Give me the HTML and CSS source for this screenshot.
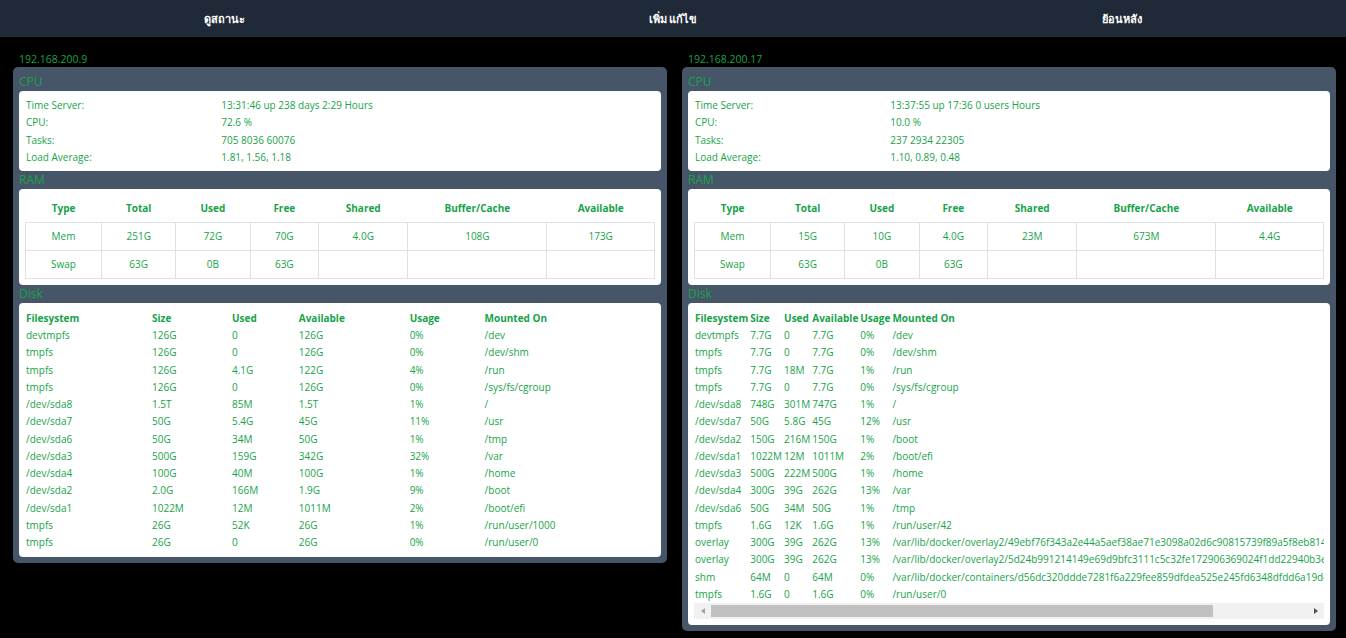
FILE: index.html
```html
<!DOCTYPE html>
<html lang="th">
<head>
<meta charset="utf-8">
<title>Server Status</title>
<link rel="stylesheet" href="styles.css">
</head>
<body>
<nav class="topnav">
  <a class="nav-item" href="#">ดูสถานะ</a>
  <a class="nav-item" href="#">เพิ่ม แก้ไข</a>
  <a class="nav-item" href="#">ย้อนหลัง</a>
</nav>
<main class="servers">
  <section class="server">
    <div class="server-ip">192.168.200.9</div>
    <div class="panel">
      <h2 class="panel-title">CPU</h2>
      <div class="card card-kv">
        <table class="kv">
          <tr><td>Time Server:</td><td>13:31:46 up 238 days 2:29 Hours</td></tr>
          <tr><td>CPU:</td><td>72.6 %</td></tr>
          <tr><td>Tasks:</td><td>705 8036 60076</td></tr>
          <tr><td>Load Average:</td><td>1.81, 1.56, 1.18</td></tr>
        </table>
      </div>
      <h2 class="panel-title">RAM</h2>
      <div class="card">
        <table class="ram">
          <thead>
            <tr><th class="w-type">Type</th><th class="w-total">Total</th><th class="w-used">Used</th><th class="w-free">Free</th><th class="w-shared">Shared</th><th class="w-buffer">Buffer/Cache</th><th class="w-avail">Available</th></tr>
          </thead>
          <tbody>
            <tr><td>Mem</td><td>251G</td><td>72G</td><td>70G</td><td>4.0G</td><td>108G</td><td>173G</td></tr>
            <tr><td>Swap</td><td>63G</td><td>0B</td><td>63G</td><td></td><td></td><td></td></tr>
          </tbody>
        </table>
      </div>
      <h2 class="panel-title">Disk</h2>
      <div class="card">
        <div class="disk-scroll">
          <table class="disk disk-fit">
            <thead>
              <tr><th class="d-fs">Filesystem</th><th class="d-size">Size</th><th class="d-used">Used</th><th class="d-avail">Available</th><th class="d-usage">Usage</th><th class="d-mount">Mounted On</th></tr>
            </thead>
            <tbody>
              <tr><td>devtmpfs</td><td>126G</td><td>0</td><td>126G</td><td>0%</td><td>/dev</td></tr>
              <tr><td>tmpfs</td><td>126G</td><td>0</td><td>126G</td><td>0%</td><td>/dev/shm</td></tr>
              <tr><td>tmpfs</td><td>126G</td><td>4.1G</td><td>122G</td><td>4%</td><td>/run</td></tr>
              <tr><td>tmpfs</td><td>126G</td><td>0</td><td>126G</td><td>0%</td><td>/sys/fs/cgroup</td></tr>
              <tr><td>/dev/sda8</td><td>1.5T</td><td>85M</td><td>1.5T</td><td>1%</td><td>/</td></tr>
              <tr><td>/dev/sda7</td><td>50G</td><td>5.4G</td><td>45G</td><td>11%</td><td>/usr</td></tr>
              <tr><td>/dev/sda6</td><td>50G</td><td>34M</td><td>50G</td><td>1%</td><td>/tmp</td></tr>
              <tr><td>/dev/sda3</td><td>500G</td><td>159G</td><td>342G</td><td>32%</td><td>/var</td></tr>
              <tr><td>/dev/sda4</td><td>100G</td><td>40M</td><td>100G</td><td>1%</td><td>/home</td></tr>
              <tr><td>/dev/sda2</td><td>2.0G</td><td>166M</td><td>1.9G</td><td>9%</td><td>/boot</td></tr>
              <tr><td>/dev/sda1</td><td>1022M</td><td>12M</td><td>1011M</td><td>2%</td><td>/boot/efi</td></tr>
              <tr><td>tmpfs</td><td>26G</td><td>52K</td><td>26G</td><td>1%</td><td>/run/user/1000</td></tr>
              <tr><td>tmpfs</td><td>26G</td><td>0</td><td>26G</td><td>0%</td><td>/run/user/0</td></tr>
            </tbody>
          </table>
        </div>
      </div>
    </div>
  </section>

  <section class="server">
    <div class="server-ip">192.168.200.17</div>
    <div class="panel">
      <h2 class="panel-title">CPU</h2>
      <div class="card card-kv">
        <table class="kv">
          <tr><td>Time Server:</td><td>13:37:55 up 17:36 0 users Hours</td></tr>
          <tr><td>CPU:</td><td>10.0 %</td></tr>
          <tr><td>Tasks:</td><td>237 2934 22305</td></tr>
          <tr><td>Load Average:</td><td>1.10, 0.89, 0.48</td></tr>
        </table>
      </div>
      <h2 class="panel-title">RAM</h2>
      <div class="card">
        <table class="ram">
          <thead>
            <tr><th class="w-type">Type</th><th class="w-total">Total</th><th class="w-used">Used</th><th class="w-free">Free</th><th class="w-shared">Shared</th><th class="w-buffer">Buffer/Cache</th><th class="w-avail">Available</th></tr>
          </thead>
          <tbody>
            <tr><td>Mem</td><td>15G</td><td>10G</td><td>4.0G</td><td>23M</td><td>673M</td><td>4.4G</td></tr>
            <tr><td>Swap</td><td>63G</td><td>0B</td><td>63G</td><td></td><td></td><td></td></tr>
          </tbody>
        </table>
      </div>
      <h2 class="panel-title">Disk</h2>
      <div class="card">
        <div class="disk-scroll">
          <table class="disk">
            <thead>
              <tr><th>Filesystem</th><th>Size</th><th>Used</th><th>Available</th><th>Usage</th><th>Mounted On</th></tr>
            </thead>
            <tbody>
              <tr><td>devtmpfs</td><td>7.7G</td><td>0</td><td>7.7G</td><td>0%</td><td>/dev</td></tr>
              <tr><td>tmpfs</td><td>7.7G</td><td>0</td><td>7.7G</td><td>0%</td><td>/dev/shm</td></tr>
              <tr><td>tmpfs</td><td>7.7G</td><td>18M</td><td>7.7G</td><td>1%</td><td>/run</td></tr>
              <tr><td>tmpfs</td><td>7.7G</td><td>0</td><td>7.7G</td><td>0%</td><td>/sys/fs/cgroup</td></tr>
              <tr><td>/dev/sda8</td><td>748G</td><td>301M</td><td>747G</td><td>1%</td><td>/</td></tr>
              <tr><td>/dev/sda7</td><td>50G</td><td>5.8G</td><td>45G</td><td>12%</td><td>/usr</td></tr>
              <tr><td>/dev/sda2</td><td>150G</td><td>216M</td><td>150G</td><td>1%</td><td>/boot</td></tr>
              <tr><td>/dev/sda1</td><td>1022M</td><td>12M</td><td>1011M</td><td>2%</td><td>/boot/efi</td></tr>
              <tr><td>/dev/sda3</td><td>500G</td><td>222M</td><td>500G</td><td>1%</td><td>/home</td></tr>
              <tr><td>/dev/sda4</td><td>300G</td><td>39G</td><td>262G</td><td>13%</td><td>/var</td></tr>
              <tr><td>/dev/sda6</td><td>50G</td><td>34M</td><td>50G</td><td>1%</td><td>/tmp</td></tr>
              <tr><td>tmpfs</td><td>1.6G</td><td>12K</td><td>1.6G</td><td>1%</td><td>/run/user/42</td></tr>
              <tr><td>overlay</td><td>300G</td><td>39G</td><td>262G</td><td>13%</td><td>/var/lib/docker/overlay2/49ebf76f343a2e44a5aef38ae71e3098a02d6c90815739f89a5f8eb8142a7c1d/merged</td></tr>
              <tr><td>overlay</td><td>300G</td><td>39G</td><td>262G</td><td>13%</td><td>/var/lib/docker/overlay2/5d24b991214149e69d9bfc3111c5c32fe172906369024f1dd22940b3e7f1a2c9/merged</td></tr>
              <tr><td>shm</td><td>64M</td><td>0</td><td>64M</td><td>0%</td><td>/var/lib/docker/containers/d56dc320ddde7281f6a229fee859dfdea525e245fd6348dfdd6a19d4e8b0c71f/mounts/shm</td></tr>
              <tr><td>tmpfs</td><td>1.6G</td><td>0</td><td>1.6G</td><td>0%</td><td>/run/user/0</td></tr>
            </tbody>
          </table>
        </div>
        <div class="hscroll" aria-hidden="true">
          <span class="hscroll-btn"><span class="arrow arrow-left"></span></span>
          <span class="hscroll-track"><span class="hscroll-thumb thumb-84"></span></span>
          <span class="hscroll-btn"><span class="arrow arrow-right"></span></span>
        </div>
      </div>
    </div>
  </section>
</main>
</body>
</html>
```

FILE: styles.css
```css
* {
  box-sizing: border-box;
}

body {
  margin: 0;
  background: #000;
  font-family: "Open Sans", "Noto Sans", "DejaVu Sans", sans-serif;
  font-size: 10px;
  color: #16a34a;
}

.topnav {
  display: flex;
  height: 37px;
  background: #1f2937;
}

.nav-item {
  flex: 1;
  display: flex;
  align-items: center;
  justify-content: center;
  color: #fff;
  font-weight: 700;
  font-size: 11px;
  text-decoration: none;
}

.servers {
  display: grid;
  grid-template-columns: 1fr 1fr;
  column-gap: 15px;
  align-items: start;
  padding: 15px 10px 0 13px;
}

.server {
  min-width: 0;
}

.server-ip {
  padding-left: 6px;
  font-size: 10.5px;
  line-height: 15px;
  color: #16a34a;
}

.panel {
  background: #475569;
  border-radius: 5px;
  padding: 6px;
}

.panel-title {
  margin: 0;
  font-size: 12px;
  font-weight: 400;
  line-height: 18px;
  color: #16a34a;
}

.card {
  background: #fff;
  border-radius: 4px;
  padding: 6px;
  min-width: 0;
}

.card-kv {
  padding-bottom: 5px;
}

table {
  border-collapse: collapse;
  width: 100%;
}

.kv td {
  padding: 0 1px;
  line-height: 17.25px;
  white-space: nowrap;
}

.kv td:first-child {
  width: 31%;
}

.ram {
  table-layout: fixed;
  text-align: center;
}

.ram th {
  padding: 6px 2px;
  line-height: 15px;
  font-weight: 700;
}

.ram td {
  padding: 6px 2px;
  line-height: 15px;
  border: 1px solid #dee2e6;
}

.w-type { width: 12.1%; }
.w-total { width: 11.8%; }
.w-used { width: 11.8%; }
.w-free { width: 10.9%; }
.w-shared { width: 14.2%; }
.w-buffer { width: 22.1%; }
.w-avail { width: 17.1%; }

.disk-scroll {
  overflow: hidden;
}

.disk {
  white-space: nowrap;
}

.disk th,
.disk td {
  padding: 0 1px;
  line-height: 17.25px;
  text-align: left;
}

.disk th {
  font-weight: 700;
  line-height: 18px;
}

.disk-fit {
  table-layout: fixed;
}

.d-fs { width: 20%; }
.d-size { width: 12.7%; }
.d-used { width: 10.6%; }
.d-avail { width: 17.6%; }
.d-usage { width: 11.9%; }
.d-mount { width: 27.2%; }

/* horizontal scrollbar (drawn) */
.hscroll {
  display: flex;
  height: 16px;
  background: #f1f1f1;
}

.hscroll-btn {
  flex: 0 0 17px;
  display: flex;
  align-items: center;
  justify-content: center;
}

.arrow {
  width: 0;
  height: 0;
  border-top: 3.5px solid transparent;
  border-bottom: 3.5px solid transparent;
}

.arrow-left {
  border-right: 4px solid #a3a3a3;
}

.arrow-right {
  border-left: 4px solid #505050;
}

.hscroll-track {
  flex: 1;
  display: flex;
  padding: 2px 0;
}

.hscroll-thumb {
  background: #c1c1c1;
}

.thumb-84 {
  width: 84.2%;
}
```
